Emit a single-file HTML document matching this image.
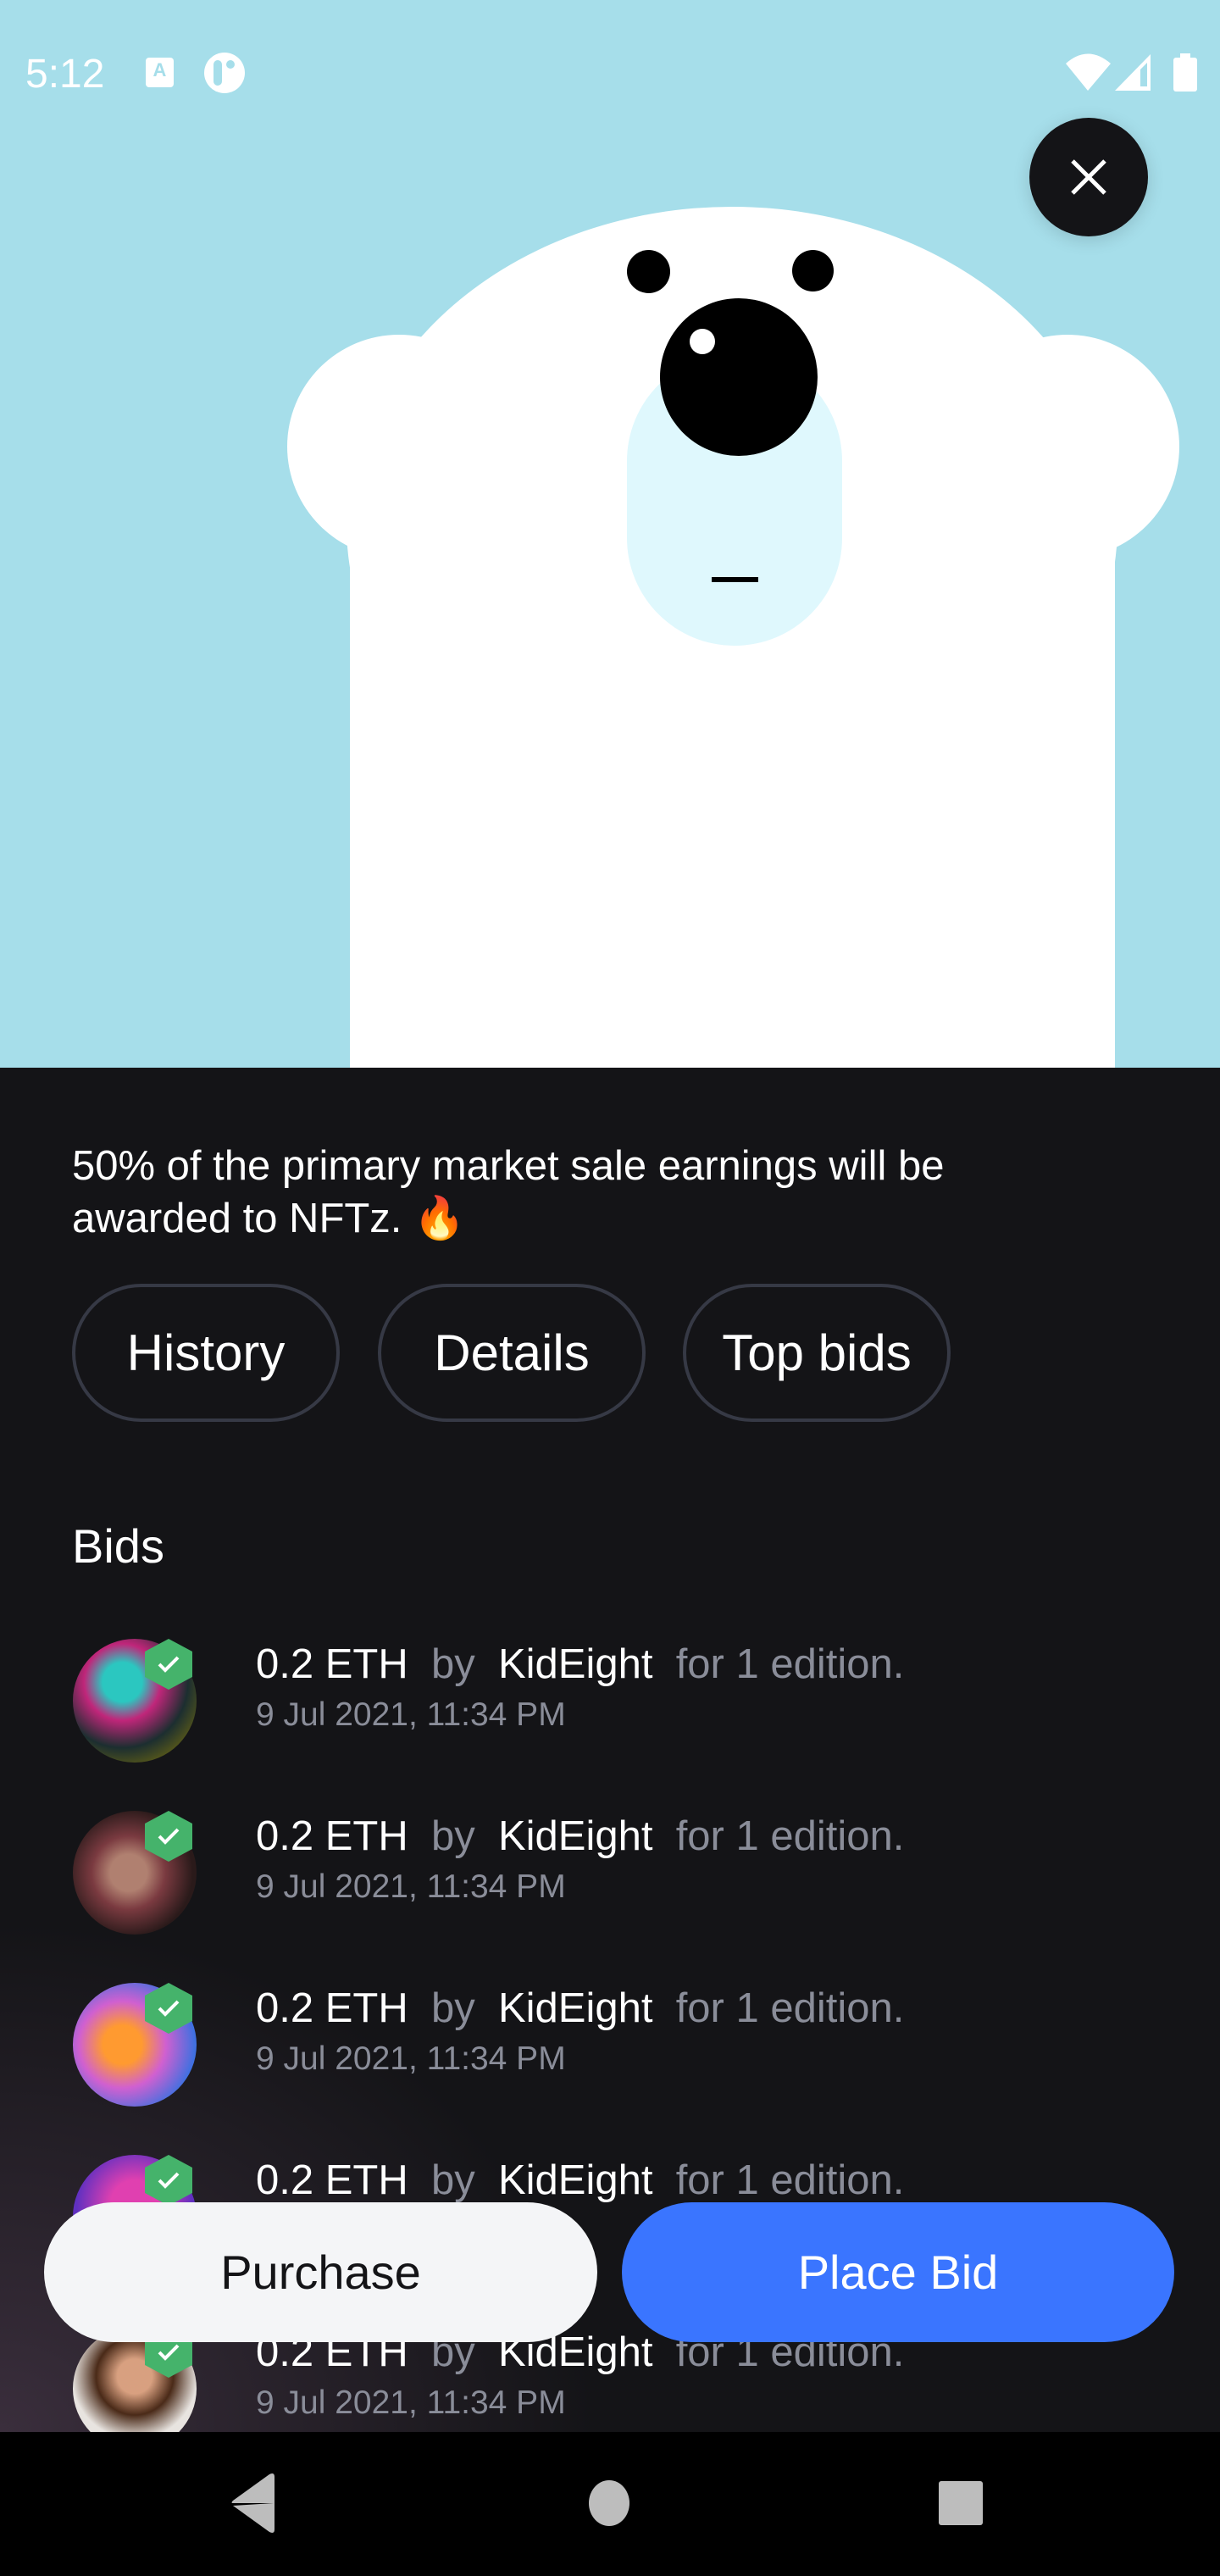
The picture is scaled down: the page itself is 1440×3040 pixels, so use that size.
<!DOCTYPE html>
<html><head><meta charset="utf-8"><style>
*{margin:0;padding:0;box-sizing:border-box}
body{width:1440px;height:3040px;overflow:hidden;background:#141417;font-family:"Liberation Sans",sans-serif;position:relative}
.abs{position:absolute}
.hero{left:0;top:0;width:1440px;height:1260px;background:#a6deea;overflow:hidden}
.w{background:#fff}
.chip{position:absolute;top:1515px;height:163px;border:4px solid #363945;border-radius:82px;color:#fff;font-size:60px;display:flex;align-items:center;justify-content:center}
.row{position:absolute;left:0;width:1440px;height:203px}
.av{position:absolute;left:86px;width:146px;height:146px;border-radius:50%}
.badge{position:absolute;left:171px;width:56px;height:60px;background:#45b36b;clip-path:polygon(50% 0,100% 25%,100% 75%,50% 100%,0 75%,0 25%);border-radius:8px}
.l1{position:absolute;left:302px;font-size:49px;color:#fff;white-space:nowrap}
.l1 .g{color:#8a8d99}
.l2{position:absolute;left:302px;font-size:39px;color:#8a8d99;white-space:nowrap}
.btn{position:absolute;top:2599px;height:165px;border-radius:83px;font-size:56px;display:flex;align-items:center;justify-content:center}
</style></head><body>
<div class="abs hero">
  <div class="abs w" style="left:339px;top:395px;width:264px;height:264px;border-radius:50%"></div>
  <div class="abs w" style="left:1128px;top:395px;width:264px;height:264px;border-radius:50%"></div>
  <div class="abs w" style="left:409px;top:244px;width:910px;height:752px;border-radius:50%"></div>
  <div class="abs w" style="left:413px;top:620px;width:903px;height:700px"></div>
  <div class="abs" style="left:740px;top:295px;width:51px;height:51px;border-radius:50%;background:#000"></div>
  <div class="abs" style="left:935px;top:295px;width:49px;height:49px;border-radius:50%;background:#000"></div>
  <div class="abs" style="left:740px;top:417px;width:254px;height:345px;border-radius:127px;background:#dff8fd"></div>
  <div class="abs" style="left:779px;top:352px;width:186px;height:186px;border-radius:50%;background:#000"></div>
  <div class="abs" style="left:814px;top:388px;width:30px;height:30px;border-radius:50%;background:#fff"></div>
  <div class="abs" style="left:840px;top:681px;width:55px;height:6px;background:#000"></div>
  <div class="abs" style="left:30px;top:60px;font-size:48px;color:#fff">5:12</div>
  <div class="abs" style="left:172px;top:68px;width:33px;height:35px;background:#fff;border-radius:4px;color:#a6deea;font-size:22px;font-weight:bold;text-align:center;line-height:30px">A</div>
  <div class="abs" style="left:241px;top:62px;width:48px;height:48px;border-radius:50%;background:#fff"></div>
  <div class="abs" style="left:252px;top:71px;width:10px;height:30px;border-radius:5px;background:#a6deea"></div>
  <div class="abs" style="left:267px;top:71px;width:10px;height:10px;border-radius:50%;background:#a6deea"></div>
  <svg class="abs" style="left:1250px;top:50px" width="190" height="80" viewBox="0 0 190 80">
    <path d="M8 25 Q34 2 61 25 L34 57 Z" fill="#fff"/>
    <path d="M66 57 L108 14 L108 57 Z" fill="#fff"/>
    <path d="M96 32 L104 24 L104 52 L96 52 Z" fill="#a6deea"/>
    <rect x="143" y="13" width="12" height="6" fill="#fff"/>
    <rect x="135" y="18" width="28" height="40" rx="3" fill="#fff"/>
  </svg>
  <div class="abs" style="left:1215px;top:139px;width:140px;height:140px;border-radius:50%;background:#141417;box-shadow:0 4px 20px rgba(0,0,0,.15)"></div>
  <svg class="abs" style="left:1260px;top:184px" width="50" height="50" viewBox="0 0 50 50"><path d="M6 6L44 44M44 6L6 44" stroke="#fff" stroke-width="5"/></svg>
</div>

<div class="abs" style="left:0;top:1260px;width:1440px;height:1610px;background:radial-gradient(ellipse 700px 600px at 0px 1610px,#3a2e3c 0%,rgba(20,20,23,0) 100%)"></div>

<div class="abs" style="left:85px;top:1345px;font-size:49px;line-height:62px;color:#fff;width:1300px">50% of the primary market sale earnings will be<br>awarded to NFTz. 🔥</div>

<div class="chip" style="left:85px;width:316px">History</div>
<div class="chip" style="left:446px;width:316px">Details</div>
<div class="chip" style="left:806px;width:316px">Top bids</div>

<div class="abs" style="left:85px;top:1792px;font-size:56px;color:#fff">Bids</div>

<div class="row" style="top:1910px">
  <div class="av" style="top:24px;background:radial-gradient(circle at 40% 35%,#2bc7c0 0 18%,#c0267a 35%,#1c2e30 60%,#5a5a18 80%)"></div>
  <div class="badge" style="top:24px"></div>
  <svg class="abs" style="left:184px;top:41px" width="30" height="26"><path d="M4 13l7 7 15-15" stroke="#fff" stroke-width="4" fill="none"/></svg>
  <div class="l1" style="top:26px">0.2 ETH <span class="g">&nbsp;by&nbsp;</span> KidEight <span class="g">&nbsp;for 1 edition.</span></div>
  <div class="l2" style="top:92px">9 Jul 2021, 11:34 PM</div>
</div>
<div class="row" style="top:2113px">
  <div class="av" style="top:24px;background:radial-gradient(circle at 45% 50%,#b08070 0 20%,#7a3a40 40%,#2a1a1a 70%)"></div>
  <div class="badge" style="top:24px"></div>
  <svg class="abs" style="left:184px;top:41px" width="30" height="26"><path d="M4 13l7 7 15-15" stroke="#fff" stroke-width="4" fill="none"/></svg>
  <div class="l1" style="top:26px">0.2 ETH <span class="g">&nbsp;by&nbsp;</span> KidEight <span class="g">&nbsp;for 1 edition.</span></div>
  <div class="l2" style="top:92px">9 Jul 2021, 11:34 PM</div>
</div>
<div class="row" style="top:2316px">
  <div class="av" style="top:24px;background:radial-gradient(circle at 40% 50%,#ff9a30 0 20%,#d060d0 45%,#4070e0 75%)"></div>
  <div class="badge" style="top:24px"></div>
  <svg class="abs" style="left:184px;top:41px" width="30" height="26"><path d="M4 13l7 7 15-15" stroke="#fff" stroke-width="4" fill="none"/></svg>
  <div class="l1" style="top:26px">0.2 ETH <span class="g">&nbsp;by&nbsp;</span> KidEight <span class="g">&nbsp;for 1 edition.</span></div>
  <div class="l2" style="top:92px">9 Jul 2021, 11:34 PM</div>
</div>
<div class="row" style="top:2519px">
  <div class="av" style="top:24px;background:radial-gradient(circle at 50% 40%,#e040b0 0 25%,#6030c0 60%)"></div>
  <div class="badge" style="top:24px"></div>
  <svg class="abs" style="left:184px;top:41px" width="30" height="26"><path d="M4 13l7 7 15-15" stroke="#fff" stroke-width="4" fill="none"/></svg>
  <div class="l1" style="top:26px">0.2 ETH <span class="g">&nbsp;by&nbsp;</span> KidEight <span class="g">&nbsp;for 1 edition.</span></div>
</div>
<div class="row" style="top:2722px;height:148px;overflow:hidden">
  <div class="av" style="top:24px;background:radial-gradient(circle at 50% 40%,#d8a080 0 18%,#4a2a18 40%,#e8e4e0 65%)"></div>
  <div class="badge" style="top:24px"></div>
  <svg class="abs" style="left:184px;top:41px" width="30" height="26"><path d="M4 13l7 7 15-15" stroke="#fff" stroke-width="4" fill="none"/></svg>
  <div class="l1" style="top:26px">0.2 ETH <span class="g">&nbsp;by&nbsp;</span> KidEight <span class="g">&nbsp;for 1 edition.</span></div>
  <div class="l2" style="top:92px">9 Jul 2021, 11:34 PM</div>
</div>

<div class="btn" style="left:52px;width:653px;background:#f4f5f7;color:#141417">Purchase</div>
<div class="btn" style="left:734px;width:652px;background:#3a75ff;color:#fff">Place Bid</div>

<div class="abs" style="left:0;top:2870px;width:1440px;height:170px;background:#000"></div>
<svg class="abs" style="left:0;top:2870px" width="1440" height="170">
  <path d="M323 84 L275 84 Q272 84 275 81 L318 50 Q324 47 324 53 L324 115 Q324 121 318 118 L275 87 Z" fill="#bdbdbd"/>
  <ellipse cx="719" cy="84" rx="24" ry="27" fill="#bdbdbd"/>
  <rect x="1108" y="58" width="52" height="52" rx="3" fill="#bdbdbd"/>
</svg>
</body></html>
